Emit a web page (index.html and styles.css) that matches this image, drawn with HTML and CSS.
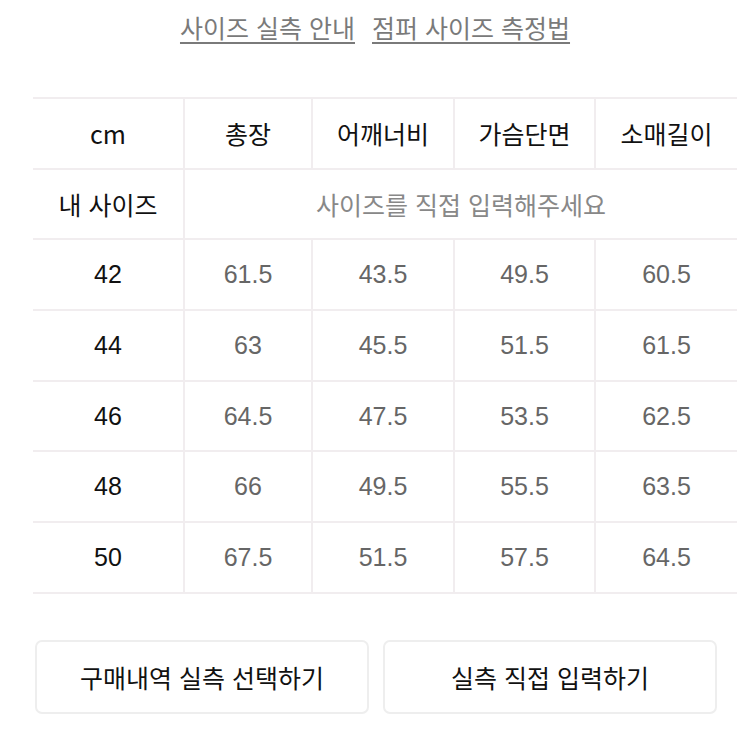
FILE: index.html
```html
<!DOCTYPE html>
<html lang="ko">
<head>
<meta charset="utf-8">
<link rel="stylesheet" href="styles.css">
</head>
<body>
<div class="page">
  <nav class="links">
    <a class="link" href="#">사이즈 실측 안내</a>
    <a class="link" href="#">점퍼 사이즈 측정법</a>
  </nav>
  <table class="size-table">
    <colgroup>
      <col class="c1"><col class="c2"><col class="c3"><col class="c4"><col class="c5">
    </colgroup>
    <thead>
      <tr><th>cm</th><th>총장</th><th>어깨너비</th><th>가슴단면</th><th>소매길이</th></tr>
    </thead>
    <tbody>
      <tr><th>내 사이즈</th><td colspan="4" class="placeholder">사이즈를 직접 입력해주세요</td></tr>
      <tr><th>42</th><td>61.5</td><td>43.5</td><td>49.5</td><td>60.5</td></tr>
      <tr><th>44</th><td>63</td><td>45.5</td><td>51.5</td><td>61.5</td></tr>
      <tr><th>46</th><td>64.5</td><td>47.5</td><td>53.5</td><td>62.5</td></tr>
      <tr><th>48</th><td>66</td><td>49.5</td><td>55.5</td><td>63.5</td></tr>
      <tr><th>50</th><td>67.5</td><td>51.5</td><td>57.5</td><td>64.5</td></tr>
    </tbody>
  </table>
  <div class="actions">
    <button class="btn">구매내역 실측 선택하기</button>
    <button class="btn">실측 직접 입력하기</button>
  </div>
</div>
</body>
</html>
```

FILE: styles.css
```css
html, body {
  margin: 0;
  padding: 0;
  background: #ffffff;
}
body {
  font-family: "Liberation Sans", "Noto Sans CJK KR", sans-serif;
  color: #111;
}
.page {
  width: 750px;
}
.links {
  display: flex;
  justify-content: center;
  gap: 17px;
  padding-top: 10px;
  height: 97px;
  box-sizing: border-box;
  padding-left: 0;
}
.link {
  font-family: "Noto Sans CJK KR", sans-serif;
  font-size: 25px;
  line-height: 34px;
  color: #7a7a7a;
  text-decoration: underline;
  text-decoration-thickness: 2px;
  text-underline-offset: 4px;
}
.size-table {
  margin-left: 33px;
  width: 704px;
  border-collapse: collapse;
  table-layout: fixed;
}
.c1 { width: 151px; }
.c2 { width: 128px; }
.c3 { width: 142px; }
.c4 { width: 141px; }
.c5 { width: 142px; }
.size-table th,
.size-table td {
  height: 68.7px;
  padding: 0;
  text-align: center;
  vertical-align: middle;
  border: 2px solid #f1edef;
  font-size: 25px;
}
.size-table tr > :first-child { border-left: none; }
.size-table tr > :last-child { border-right: none; }
.size-table th {
  font-weight: normal;
  color: #111;
}
.size-table thead th {
  font-family: "Noto Sans CJK KR", sans-serif;
}
.size-table tbody th {
  font-family: "Liberation Sans", "Noto Sans CJK KR", sans-serif;
}
.size-table td {
  color: #666;
}
.size-table td.placeholder {
  font-family: "Noto Sans CJK KR", sans-serif;
  color: #888;
}
.actions {
  display: flex;
  gap: 14px;
  padding-left: 35px;
  margin-top: 46px;
}
.btn {
  width: 334px;
  height: 74px;
  background: #fff;
  border: 2px solid #eeeeee;
  border-radius: 7px;
  font-family: "Noto Sans CJK KR", sans-serif;
  font-size: 25px;
  color: #111;
  padding: 0;
}
```
